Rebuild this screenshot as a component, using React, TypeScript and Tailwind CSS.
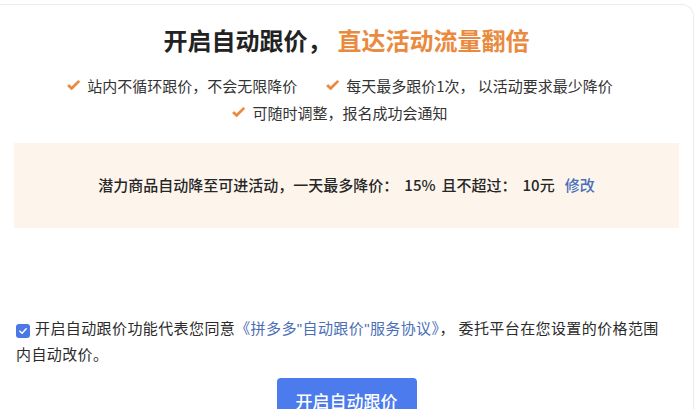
const perks = [
  ["站内不循环跟价，不会无限降价", "每天最多跟价1次， 以活动要求最少降价"],
  ["可随时调整，报名成功会通知"],
];

// heavy orange tick used in front of each perk
function Tick() {
  return (
    <svg viewBox="0 0 16 16" className="h-[15px] w-[15px] shrink-0" aria-hidden="true">
      <path
        d="M1.5 8.6 L3.4 6.9 L6 9.4 L13.2 2.4 L14.8 3.9 L6 12.8 Z"
        fill="#e8873a"
        stroke="#e8873a"
        strokeWidth="0.6"
        strokeLinejoin="round"
      />
    </svg>
  );
}

function Perk({ text }: { text: string }) {
  return (
    <span className="flex items-center gap-[6px]">
      <Tick />
      <span>{text}</span>
    </span>
  );
}

const narrow = { fontFamily: '"Liberation Sans", sans-serif' };

export default function App() {
  return (
    <div
      className="h-[409px] w-[698px] overflow-hidden bg-white"
      style={{ fontFamily: '"Noto Sans CJK SC", "Noto Sans", sans-serif' }}
    >
      <div className="mt-[4px] mr-[4px] rounded-tr-[12px] border-t border-r border-[#ebebeb] bg-white pt-[19px]">
        <h1 className="text-center text-[24px] leading-[32px] font-bold text-[#222]">
          开启自动跟价，<span className="ml-[6px] text-[#ea8a3e]">直达活动流量翻倍</span>
        </h1>

        <div className="mt-[16px] flex flex-col items-center pr-[14px] text-[15px] leading-[27px] text-[#333]">
          {perks.map((row, i) => (
            <div key={i} className="flex gap-[28px]">
              {row.map((t) => (
                <Perk key={t} text={t} />
              ))}
            </div>
          ))}
        </div>

        <div className="mx-[14px] mt-[17px] flex h-[85px] items-center justify-center bg-[#fdf5ec] text-[15px] font-medium text-[#262626]">
          <span>潜力商品自动降至可进活动，一天最多降价：</span>
          <span className="ml-[6px]">15%</span>
          <span className="ml-[6px]">且不超过：</span>
          <span className="ml-[6px]">10元</span>
          <span className="ml-[10px] text-[#4a6fb8]">修改</span>
        </div>

        <p className="mt-[87px] pl-[16px] pr-[16px] text-[15px] leading-[25px] tracking-[0.4px] text-[#2b2b2b]">
          <span className="mr-[5px] inline-flex h-[14px] w-[14px] translate-y-[2px] items-center justify-center rounded-[3px] bg-[#4a78e6]">
            <svg viewBox="0 0 12 12" className="h-[10px] w-[10px]" aria-hidden="true">
              <path d="M2.2 6.2 L4.9 8.8 L9.8 3.4" fill="none" stroke="#fff" strokeWidth="1.8" strokeLinecap="round" strokeLinejoin="round" />
            </svg>
          </span>
          开启自动跟价功能代表您同意
          <span className="text-[#4a6fb8]">
            《拼多多<span style={narrow}>"</span>自动跟价<span style={narrow}>"</span>服务协议》
          </span>
          ， 委托平台在您设置的价格范围
          <br />
          内自动改价。
        </p>

        <div className="mt-[12px] flex justify-center">
          <button
            type="button"
            className="h-[46px] w-[140px] rounded-[4px] bg-[#4b7bec] text-[17px] font-medium text-white"
          >
            开启自动跟价
          </button>
        </div>
      </div>
    </div>
  );
}
